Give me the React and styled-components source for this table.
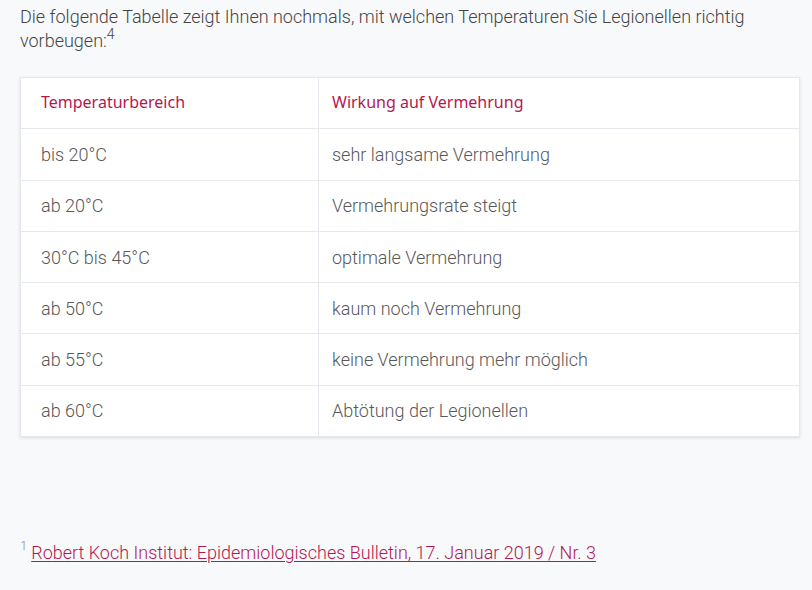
import React from "react";
import styled, { createGlobalStyle } from "styled-components";

const Global = createGlobalStyle`
  html, body { margin: 0; padding: 0; background: #f8f9fb; }
  body { font-family: Roboto, "Liberation Sans", sans-serif; }
`;

const Page = styled.div`
  padding: 5px 12px 0 20px;
  color: #4a4a4a;
  font-family: Roboto, "Liberation Sans", sans-serif;
  font-weight: 300;
  width: 780px;
`;

const Sup = styled.span`
  display: inline-block;
  font-size: ${(p) => p.$size}px;
  line-height: 14px;
  vertical-align: top;
  margin-top: ${(p) => p.$top}px;
  margin-right: ${(p) => p.$gap}px;
  color: ${(p) => p.$color};
`;

const Intro = styled.p`
  margin: 0;
  font-size: 18px;
  line-height: 23.5px;
  color: #444;
`;

const Card = styled.div`
  margin-top: 25px;
  background: #fff;
  border: 1px solid #e6e8ee;
  box-shadow: 0 1px 3px rgba(0, 0, 0, 0.12);
`;

const Table = styled.table`
  width: 100%;
  border-collapse: collapse;
`;

const Th = styled.th`
  text-align: left;
  font-family: "Noto Sans", "Open Sans", sans-serif;
  font-weight: 400;
  font-size: 16px;
  color: #b5174f;
  height: 47.3px;
  padding: 0 13px 3px;
  border-bottom: 1px solid #e6e8ee;
  &:first-child {
    width: 264px;
    padding-left: 20px;
    border-right: 1px solid #e6e8ee;
  }
`;

const Td = styled.td`
  font-size: 18px;
  color: #585858;
  height: 50.3px;
  padding: 0 13px;
  border-bottom: 1px solid #e6e8ee;
  tr:last-child & { border-bottom: none; }
  &:first-child {
    padding-left: 20px;
    border-right: 1px solid #e6e8ee;
  }
`;

const Footnote = styled.p`
  margin: 104px 0 0;
  font-size: 18px;
  line-height: 24px;
`;

const Link = styled.a`
  color: #b5174f;
  text-decoration: underline;
  text-underline-offset: 2px;
`;

const rows = [
  ["bis 20°C", "sehr langsame Vermehrung"],
  ["ab 20°C", "Vermehrungsrate steigt"],
  ["30°C bis 45°C", "optimale Vermehrung"],
  ["ab 50°C", "kaum noch Vermehrung"],
  ["ab 55°C", "keine Vermehrung mehr möglich"],
  ["ab 60°C", "Abtötung der Legionellen"],
];

export default function App() {
  return (
    <>
      <Global />
      <Page>
        <Intro>
          Die folgende Tabelle zeigt Ihnen nochmals, mit welchen Temperaturen Sie Legionellen richtig
          vorbeugen:<Sup $size={14} $top={-2} $gap={0} $color="#444">4</Sup>
        </Intro>
        <Card>
          <Table>
            <thead>
              <tr>
                <Th>Temperaturbereich</Th>
                <Th>Wirkung auf Vermehrung</Th>
              </tr>
            </thead>
            <tbody>
              {rows.map(([a, b]) => (
                <tr key={a}>
                  <Td>{a}</Td>
                  <Td>{b}</Td>
                </tr>
              ))}
            </tbody>
          </Table>
        </Card>
        <Footnote>
          <Sup $size={13} $top={-2} $gap={4} $color="#888">1</Sup>
          <Link href="#">Robert Koch Institut: Epidemiologisches Bulletin, 17. Januar 2019 / Nr. 3</Link>
        </Footnote>
      </Page>
    </>
  );
}
